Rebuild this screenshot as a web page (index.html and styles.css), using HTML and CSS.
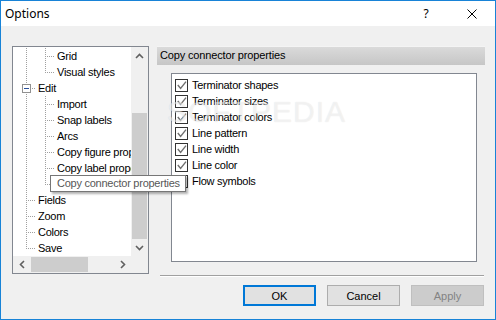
FILE: index.html
```html
<!DOCTYPE html>
<html lang="en">

<head>
    <meta charset="UTF-8">
    <title>Options</title>
    <link rel="stylesheet" href="styles.css">
</head>

<body>
    <div class="window">
        <div class="titlebar">
            <span class="title">Options</span>
            <span class="caption-btn help">?</span>
            <span class="caption-btn close">
                <svg width="10" height="10" viewBox="0 0 10 10">
                    <path d="M0.5 0.5 L9.5 9.5 M9.5 0.5 L0.5 9.5" stroke="#000" stroke-width="1" fill="none" />
                </svg>
            </span>
        </div>

        <div class="content">
            <div class="main">
                <div class="tree">
                    <div class="tree-items">
                        <div class="row"><span class="g pipe"></span><span class="g tee"></span><span class="label">Grid</span></div>
                        <div class="row"><span class="g pipe"></span><span class="g elbow"></span><span class="label">Visual styles</span></div>
                        <div class="row"><span class="g tee"><i class="expander"></i></span><span class="label">Edit</span></div>
                        <div class="row"><span class="g pipe"></span><span class="g tee"></span><span class="label">Import</span></div>
                        <div class="row"><span class="g pipe"></span><span class="g tee"></span><span class="label">Snap labels</span></div>
                        <div class="row"><span class="g pipe"></span><span class="g tee"></span><span class="label">Arcs</span></div>
                        <div class="row"><span class="g pipe"></span><span class="g tee"></span><span class="label">Copy figure properties</span></div>
                        <div class="row"><span class="g pipe"></span><span class="g tee"></span><span class="label">Copy label properties</span></div>
                        <div class="row"><span class="g pipe"></span><span class="g elbow"></span><span class="label">Copy connector properties</span></div>
                        <div class="row"><span class="g tee"></span><span class="label">Fields</span></div>
                        <div class="row"><span class="g tee"></span><span class="label">Zoom</span></div>
                        <div class="row"><span class="g tee"></span><span class="label">Colors</span></div>
                        <div class="row"><span class="g elbow"></span><span class="label">Save</span></div>
                    </div>

                    <div class="vscroll">
                        <div class="sb-btn">
                            <svg width="9" height="6" viewBox="0 0 9 6"><path d="M1 5 L4.5 1.5 L8 5" stroke="#606060" stroke-width="1.6" fill="none" /></svg>
                        </div>
                        <div class="sb-track-v"><div class="thumb-v"></div></div>
                        <div class="sb-btn">
                            <svg width="9" height="6" viewBox="0 0 9 6"><path d="M1 1 L4.5 4.5 L8 1" stroke="#606060" stroke-width="1.6" fill="none" /></svg>
                        </div>
                    </div>

                    <div class="hscroll">
                        <div class="sb-btn">
                            <svg width="6" height="9" viewBox="0 0 6 9"><path d="M5 1 L1.5 4.5 L5 8" stroke="#606060" stroke-width="1.6" fill="none" /></svg>
                        </div>
                        <div class="sb-track-h"><div class="thumb-h"></div></div>
                        <div class="sb-btn">
                            <svg width="6" height="9" viewBox="0 0 6 9"><path d="M1 1 L4.5 4.5 L1 8" stroke="#606060" stroke-width="1.6" fill="none" /></svg>
                        </div>
                    </div>
                    <div class="corner"></div>

                    <!-- tooltip for the truncated node -->
                    <div class="tooltip">Copy connector properties</div>
                </div>

                <div class="page">
                    <div class="page-header">Copy connector properties</div>
                    <div class="checklist">
                        <label class="check-row"><span class="cb checked"></span>Terminator shapes</label>
                        <label class="check-row"><span class="cb checked"></span>Terminator sizes</label>
                        <label class="check-row"><span class="cb checked"></span>Terminator colors</label>
                        <label class="check-row"><span class="cb checked"></span>Line pattern</label>
                        <label class="check-row"><span class="cb checked"></span>Line width</label>
                        <label class="check-row"><span class="cb checked"></span>Line color</label>
                        <label class="check-row"><span class="cb"></span>Flow symbols</label>
                    </div>
                    <div class="separator"></div>
                    <div class="watermark">SOFTPEDIA</div>
                </div>
            </div>

            <div class="buttons">
                <button class="btn default">OK</button>
                <button class="btn">Cancel</button>
                <button class="btn disabled">Apply</button>
            </div>
        </div>
    </div>
</body>

</html>
```

FILE: styles.css
```css
* {
    margin: 0;
    padding: 0;
    box-sizing: border-box;
}

html,
body {
    background: #f0f0f0;
}

body {
    font-family: "Liberation Sans", Arial, sans-serif;
    font-size: 11px;
    color: #000;
}

.window {
    width: 496px;
    height: 320px;
    border: 1px solid #1883d7;
    background: #f0f0f0;
    display: flex;
    flex-direction: column;
}

/* title bar */
.titlebar {
    height: 25px;
    background: #fff;
    display: flex;
    align-items: center;
    font-family: "Noto Sans", "Open Sans", sans-serif;
    font-size: 12px;
}

.title {
    flex: 1;
    padding-left: 4px;
}

.caption-btn {
    width: 46px;
    height: 25px;
    display: flex;
    align-items: center;
    justify-content: center;
}

/* dialog body */
.content {
    flex: 1;
    padding: 20px 10px 0 11px;
}

.main {
    display: flex;
    align-items: flex-start;
    gap: 8px;
}

/* tree view */
.tree {
    position: relative;
    width: 137px;
    height: 228px;
    border: 1px solid #828790;
    background: #fff;
    display: grid;
    grid-template-columns: 118px 17px;
    grid-template-rows: 209px 17px;
}

.tree-items {
    overflow: hidden;
    padding: 1px 0 0 4px;
    letter-spacing: -0.25px;
}

.row {
    display: flex;
    align-items: center;
    height: 16px;
    white-space: nowrap;
}

.label {
    margin-left: 2px;
}

.g {
    position: relative;
    flex: none;
    width: 19px;
    height: 16px;
}

.g::before,
.g::after {
    content: "";
    position: absolute;
}

.pipe::before,
.tee::before,
.elbow::before {
    left: 9px;
    top: 0;
    width: 1px;
    height: 16px;
    background: repeating-linear-gradient(to bottom, #a0a0a0 0 1px, transparent 1px 2px);
}

.elbow::before {
    height: 9px;
}

.tee::after,
.elbow::after {
    left: 10px;
    top: 8px;
    width: 8px;
    height: 1px;
    background: repeating-linear-gradient(to right, transparent 0 1px, #a0a0a0 1px 2px);
}

.pipe::after {
    display: none;
}

.expander {
    position: absolute;
    left: 5px;
    top: 4px;
    width: 9px;
    height: 9px;
    border: 1px solid #919191;
    background: #fff;
    z-index: 1;
}

.expander::after {
    content: "";
    position: absolute;
    left: 1px;
    top: 3px;
    width: 5px;
    height: 1px;
    background: #2a4f9b;
}

/* scrollbars */
.vscroll {
    background: #f0f0f0;
    display: flex;
    flex-direction: column;
}

.hscroll {
    background: #f0f0f0;
    display: flex;
}

.corner {
    background: #f0f0f0;
}

.sb-btn {
    flex: none;
    width: 17px;
    height: 17px;
    display: flex;
    align-items: center;
    justify-content: center;
}

.sb-track-v {
    flex: 1;
    padding: 49px 1px 0;
}

.thumb-v {
    height: 126px;
    background: #cdcdcd;
}

.sb-track-h {
    flex: 1;
    padding: 1px 0 1px 1px;
}

.thumb-h {
    width: 57px;
    height: 15px;
    background: #cdcdcd;
}

.tooltip {
    position: absolute;
    left: 37px;
    top: 128px;
    height: 17px;
    padding: 0 5px 0 6px;
    border: 1px solid #767676;
    background: #fff;
    color: #575757;
    line-height: 15px;
    white-space: nowrap;
    letter-spacing: -0.25px;
    box-shadow: 2px 2px 2px rgba(0, 0, 0, 0.3);
    z-index: 5;
}

/* property page */
.page {
    position: relative;
    width: 328px;
}

.page-header {
    height: 19px;
    border-top: 1px solid #f4f4f4;
    background: linear-gradient(#dadada, #c6c6c6);
    padding-left: 3px;
    line-height: 17px;
    letter-spacing: -0.15px;
}

.checklist {
    height: 189px;
    margin: 8px 8px 0 14px;
    border: 1px solid #828790;
    background: #fff;
    padding: 3px 0 0 3px;
    letter-spacing: -0.25px;
}

.check-row {
    display: flex;
    align-items: center;
    height: 16px;
}

.cb {
    width: 13px;
    height: 13px;
    margin-right: 4px;
    border: 1px solid #333;
    background: #fff center / 11px 11px no-repeat;
}

.cb.checked {
    background-image: url("data:image/svg+xml,%3Csvg xmlns='http://www.w3.org/2000/svg' width='11' height='11' viewBox='0 0 11 11'%3E%3Cpath d='M1.8 5 L4.6 8.4 L10 1.6' stroke='%23707070' stroke-width='1.4' fill='none'/%3E%3C/svg%3E");
}

.separator {
    height: 2px;
    margin: 13px 1px 0 3px;
    border-top: 1px solid #a0a0a0;
    border-bottom: 1px solid #fff;
}

.watermark {
    position: absolute;
    left: 10px;
    top: 51px;
    font-size: 30px;
    line-height: 30px;
    letter-spacing: 1px;
    color: rgba(255, 255, 255, 0.55);
    text-shadow: 0 0 1px rgba(0, 0, 0, 0.12);
    pointer-events: none;
}

/* buttons */
.buttons {
    display: flex;
    justify-content: flex-end;
    gap: 11px;
    margin-top: 8px;
    padding-right: 1px;
}

.btn {
    width: 73px;
    height: 21px;
    font-family: "Liberation Sans", Arial, sans-serif;
    font-size: 11px;
    color: #000;
    background: #e1e1e1;
    border: 1px solid #adadad;
}

.btn.default {
    border: 2px solid #0078d7;
}

.btn.disabled {
    background: #cccccc;
    border-color: #bfbfbf;
    color: #838383;
}
```
